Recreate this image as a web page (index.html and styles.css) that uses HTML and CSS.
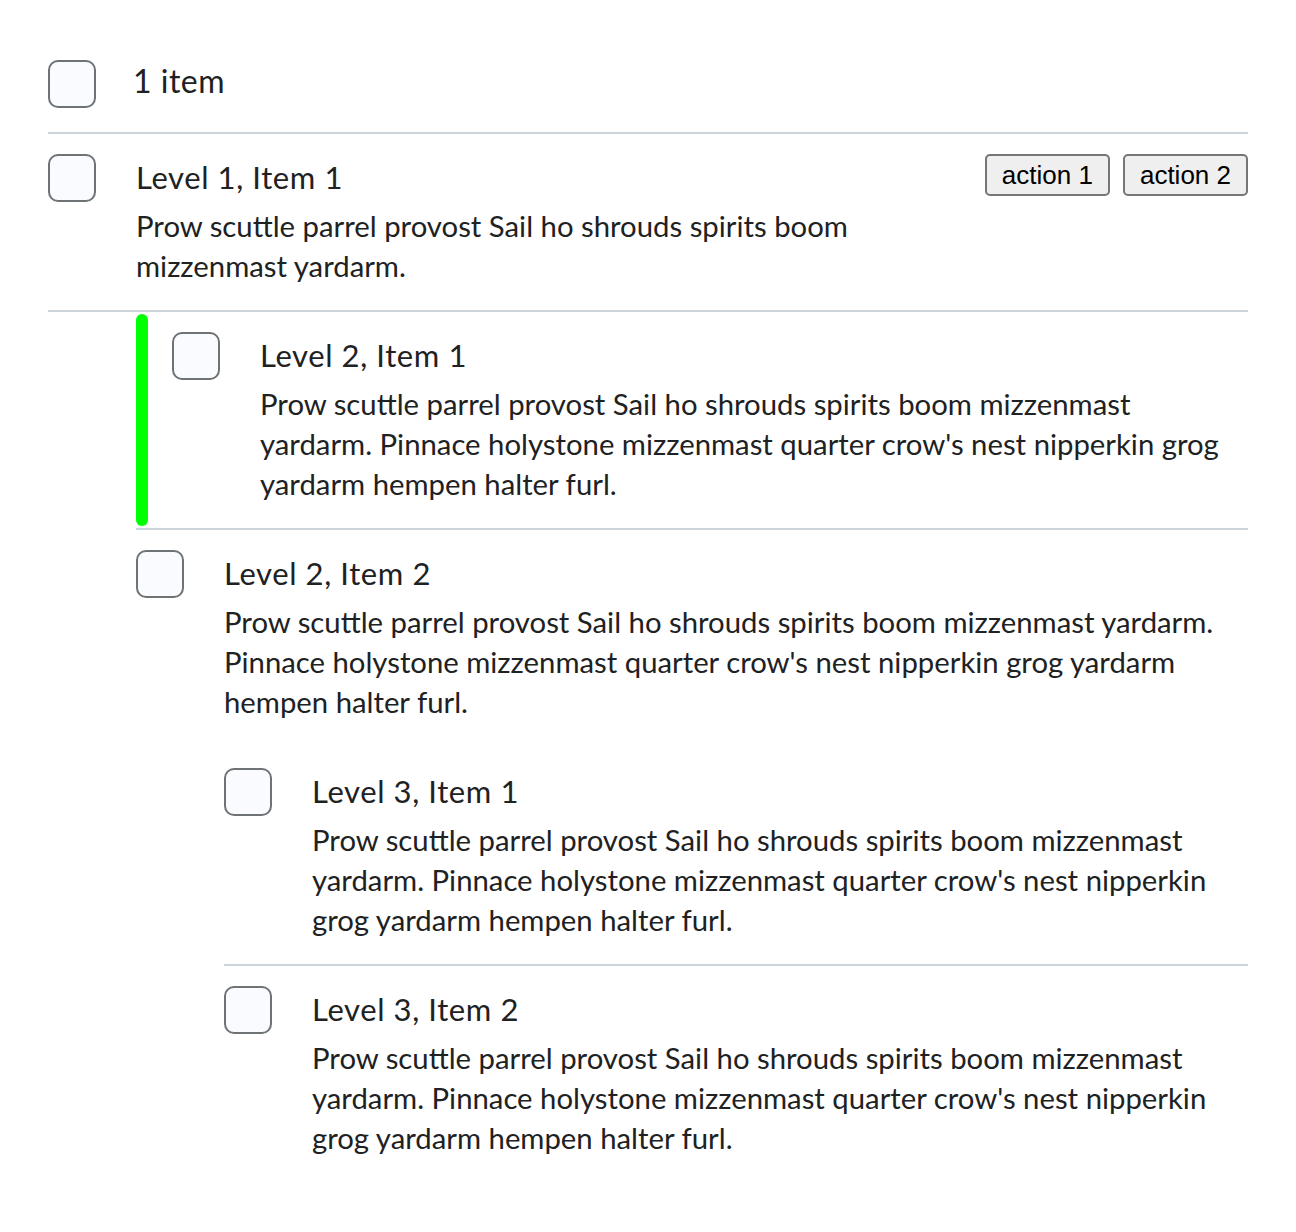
FILE: index.html
```html
<!DOCTYPE html>
<html lang="en">
<head>
<meta charset="utf-8">
<title>List</title>
<link rel="stylesheet" href="styles.css">
</head>
<body>
<div class="page">
  <div class="header">
    <span class="cb"></span>
    <span class="count">1 item</span>
  </div>
  <ul class="list">
    <li class="item">
      <div class="row sep">
        <span class="cb"></span>
        <div class="content">
          <div class="title">Level 1, Item 1</div>
          <div class="desc">Prow scuttle parrel provost Sail ho shrouds spirits boom mizzenmast yardarm.</div>
        </div>
        <div class="actions">
          <button class="btn" type="button">action 1</button>
          <button class="btn" type="button">action 2</button>
        </div>
      </div>
      <ul class="list nested">
        <li class="item">
          <div class="row sep selected">
            <span class="bar"></span>
            <span class="cb"></span>
            <div class="content">
              <div class="title">Level 2, Item 1</div>
              <div class="desc">Prow scuttle parrel provost Sail ho shrouds spirits boom mizzenmast yardarm. Pinnace holystone mizzenmast quarter crow's nest nipperkin grog yardarm hempen halter furl.</div>
            </div>
          </div>
        </li>
        <li class="item">
          <div class="row">
            <span class="cb"></span>
            <div class="content">
              <div class="title">Level 2, Item 2</div>
              <div class="desc">Prow scuttle parrel provost Sail ho shrouds spirits boom mizzenmast yardarm. Pinnace holystone mizzenmast quarter crow's nest nipperkin grog yardarm hempen halter furl.</div>
            </div>
          </div>
          <ul class="list nested">
            <li class="item">
              <div class="row sep">
                <span class="cb"></span>
                <div class="content">
                  <div class="title">Level 3, Item 1</div>
                  <div class="desc">Prow scuttle parrel provost Sail ho shrouds spirits boom mizzenmast yardarm. Pinnace holystone mizzenmast quarter crow's nest nipperkin grog yardarm hempen halter furl.</div>
                </div>
              </div>
            </li>
            <li class="item">
              <div class="row">
                <span class="cb"></span>
                <div class="content">
                  <div class="title">Level 3, Item 2</div>
                  <div class="desc">Prow scuttle parrel provost Sail ho shrouds spirits boom mizzenmast yardarm. Pinnace holystone mizzenmast quarter crow's nest nipperkin grog yardarm hempen halter furl.</div>
                </div>
              </div>
            </li>
          </ul>
        </li>
      </ul>
    </li>
  </ul>
</div>
</body>
</html>
```
FILE: styles.css
```css
html, body {
  margin: 0;
  padding: 0;
  background: #ffffff;
}

body {
  font-family: Lato, "Noto Sans", sans-serif;
  color: #202122;
}

.page {
  padding: 60px 48px 40px 48px;
}

.header {
  display: flex;
  align-items: flex-start;
  gap: 37px;
  padding-bottom: 24px;
  border-bottom: 2px solid #cdd5dc;
}

.count {
  font-size: 32px;
  line-height: 42px;
  letter-spacing: 0.5px;
}

.cb {
  flex: 0 0 auto;
  box-sizing: border-box;
  width: 48px;
  height: 48px;
  border: 2px solid #6e7376;
  border-radius: 10px;
  background: #f9fbff;
}

.list {
  list-style: none;
  margin: 0;
  padding: 0;
}

.nested {
  margin-left: 88px;
}

.row {
  position: relative;
  display: flex;
  align-items: flex-start;
  gap: 40px;
  padding: 20px 0 24px 0;
  border-bottom: 2px solid transparent;
}

.row.sep {
  border-bottom-color: #cdd5dc;
}

.row.selected {
  padding-left: 36px;
}

.bar {
  position: absolute;
  left: 0;
  top: 2px;
  bottom: 2px;
  width: 12px;
  border-radius: 6px;
  background: #00ff00;
}

.content {
  flex: 1 1 auto;
  min-width: 0;
  padding-right: 20px;
}

.title {
  font-size: 31px;
  line-height: 46px;
  letter-spacing: 0.6px;
  margin-bottom: 6px;
}

.desc {
  font-size: 29.3px;
  line-height: 40px;
}

.actions {
  flex: 0 0 auto;
  display: flex;
  gap: 13px;
}

.btn {
  font-family: "Liberation Sans", Arial, sans-serif;
  font-size: 26px;
  line-height: 30px;
  color: #000000;
  background: #efefef;
  border: 2px solid #767676;
  border-radius: 5px;
  padding: 4px 15px;
  margin: 0;
}
```
